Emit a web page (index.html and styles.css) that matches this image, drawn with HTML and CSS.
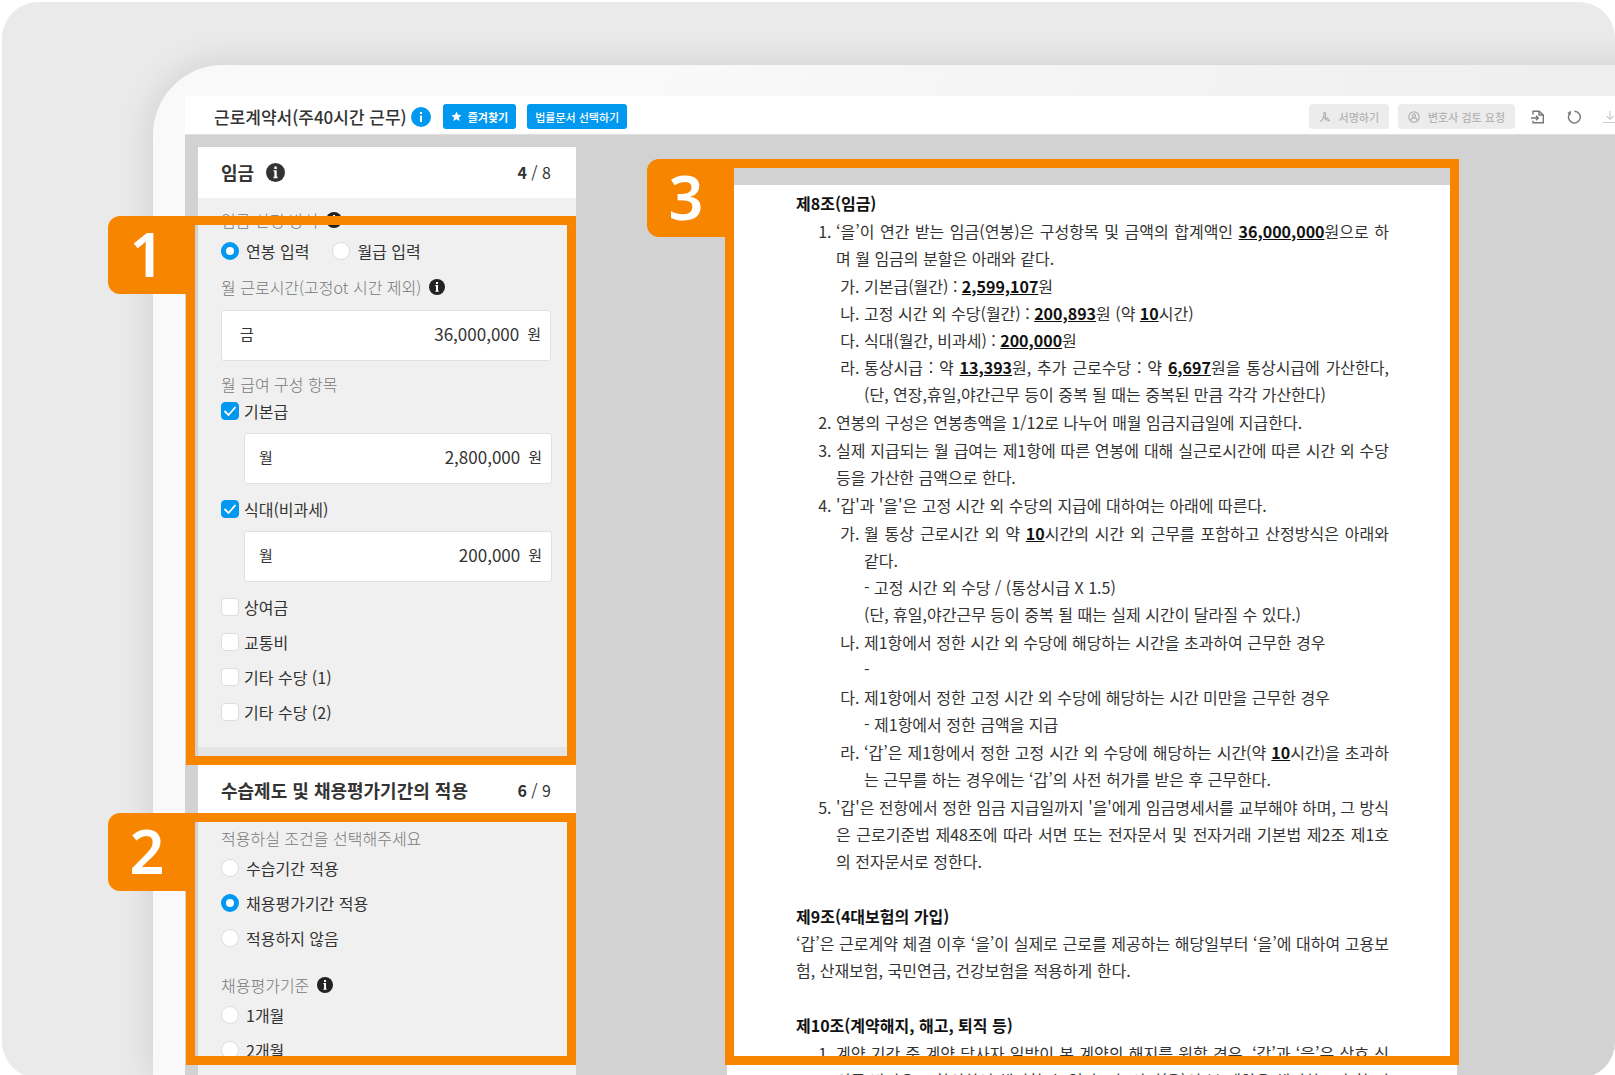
FILE: index.html
```html
<!DOCTYPE html>
<html lang="ko">
<head>
<meta charset="utf-8">
<meta name="viewport" content="width=device-width, initial-scale=1">
<title>근로계약서(주40시간 근무)</title>
<link rel="stylesheet" href="styles.css">
</head>
<body>
<svg class="sprite" aria-hidden="true">
  <symbol id="info" viewBox="0 0 20 20">
    <circle cx="10" cy="10" r="10" fill="currentColor"/>
    <path d="M8.800 3.800h2.500v2.500H8.800zM7.900 7.600h3.400v7h.9V16H7.900v-1.400h.9V9h-.9z" fill="#fff"/>
  </symbol>
  <symbol id="info-round" viewBox="0 0 20 20">
    <circle cx="10" cy="10" r="10" fill="currentColor"/>
    <path d="M9 5h2v2H9zM9 8.5h2V15H9z" fill="#fff"/>
  </symbol>
</svg>

<div class="stage">
  <div class="device">
    <main class="screen">
      <header class="topbar">
        <h1 class="topbar-title">근로계약서(주40시간 근무)</h1>
        <svg class="icon-title"><use href="#info-round"/></svg>
        <button class="btn btn-favorite" type="button">
          <svg class="icon-star" viewBox="0 0 12 12"><path d="M6 .5l1.6 3.6 3.9.4-2.9 2.6.8 3.9L6 9l-3.400 2 .8-3.900L.5 4.500l3.900-.4z" fill="currentColor"/></svg>
          즐겨찾기
        </button>
        <button class="btn" type="button">법률문서 선택하기</button>
        <div class="tools">
          <button class="btn btn-muted" type="button" disabled>
            <svg class="icon-small" viewBox="0 0 12 12" fill="none" stroke="currentColor" stroke-width="1.300"><path d="M1 10.500c3-1 4-5 4-8.500 0-1 1.500-1 1.500.5v7M3.500 6.500h3M6.500 9.500c1-3 2.500-3 2.500-1.500v1.500h2"/></svg>
            서명하기
          </button>
          <button class="btn btn-muted btn-review" type="button" disabled>
            <svg class="icon-small" viewBox="0 0 12 12" fill="none" stroke="currentColor" stroke-width="1.300"><circle cx="6" cy="6" r="5.200"/><circle cx="6" cy="4.800" r="1.600"/><path d="M2.500 9.500c.8-2 2-2.600 3.500-2.600s2.700.6 3.500 2.600"/></svg>
            변호사 검토 요청
          </button>
          <button class="tool" type="button" aria-label="불러오기">
            <svg viewBox="0 0 14 14" fill="none" stroke="currentColor" stroke-width="1.400"><path d="M2 4.500V1.200h6.200L12.300 5v7.800H2v-2"/><path d="M8 1.200V5h4.300M0 8h7M5 5.800L7.300 8 5 10.200"/></svg>
          </button>
          <button class="tool" type="button" aria-label="되돌리기">
            <svg viewBox="0 0 14 14" fill="none" stroke="currentColor" stroke-width="1.400"><path d="M2.700 3.500A5.900 5.900 0 1 0 7.500 1.200M1 2.500l2 1.400.3-2.700"/></svg>
          </button>
          <button class="tool tool-faint" type="button" aria-label="다운로드">
            <svg viewBox="0 0 14 14" fill="none" stroke="currentColor" stroke-width="1.200"><path d="M7 1v8M3.500 6L7 9.300 10.500 6M0 12.500h14"/></svg>
          </button>
        </div>
      </header>

      <div class="workspace">
        <aside class="panel">
          <section class="group">
            <div class="group-head">
              <h2 class="group-title">임금</h2>
              <svg class="icon-head"><use href="#info"/></svg>
              <span class="step"><b>4</b> / 8</span>
            </div>
            <div class="group-body">
              <p class="caption caption-first">임금 산정 방식 <svg class="icon-info"><use href="#info"/></svg></p>
              <div class="radio-row">
                <label class="option"><input class="radio" type="radio" name="pay" checked>연봉 입력</label>
                <label class="option"><input class="radio" type="radio" name="pay">월급 입력</label>
              </div>
              <p class="caption caption-hours">월 근로시간(고정ot 시간 제외) <svg class="icon-info"><use href="#info"/></svg></p>
              <label class="field"><span>금</span><input class="amount" type="text" value="36,000,000"><span>원</span></label>
              <p class="caption caption-items">월 급여 구성 항목</p>
              <label class="option option-check"><input class="check" type="checkbox" checked>기본급</label>
              <label class="field field-nested"><span>월</span><input class="amount" type="text" value="2,800,000"><span>원</span></label>
              <label class="option option-check"><input class="check" type="checkbox" checked>식대(비과세)</label>
              <label class="field field-nested"><span>월</span><input class="amount" type="text" value="200,000"><span>원</span></label>
              <div class="option-list">
                <label class="option option-check"><input class="check" type="checkbox">상여금</label>
                <label class="option option-check"><input class="check" type="checkbox">교통비</label>
                <label class="option option-check"><input class="check" type="checkbox">기타 수당 (1)</label>
                <label class="option option-check"><input class="check" type="checkbox">기타 수당 (2)</label>
              </div>
            </div>
            <div class="callout callout-side"><span class="tag">1</span></div>
          </section>

          <section class="group">
            <div class="group-head">
              <h2 class="group-title">수습제도 및 채용평가기간의 적용</h2>
              <span class="step"><b>6</b> / 9</span>
            </div>
            <div class="group-body group-body-trial">
              <p class="caption">적용하실 조건을 선택해주세요</p>
              <div class="option-list">
                <label class="option"><input class="radio" type="radio" name="trial">수습기간 적용</label>
                <label class="option"><input class="radio" type="radio" name="trial" checked>채용평가기간 적용</label>
                <label class="option"><input class="radio" type="radio" name="trial">적용하지 않음</label>
              </div>
              <p class="caption caption-period">채용평가기준 <svg class="icon-info"><use href="#info"/></svg></p>
              <div class="option-list">
                <label class="option"><input class="radio" type="radio" name="period">1개월</label>
                <label class="option"><input class="radio" type="radio" name="period">2개월</label>
              </div>
            </div>
            <div class="callout callout-trial"><span class="tag">2</span></div>
          </section>
        </aside>

        <div class="viewer">
          <article class="paper">
            <h3 class="article-title">제8조(임금)</h3>
            <ol class="clauses">
              <li>‘을’이 연간 받는 임금(연봉)은 구성항목 및 금액의 합계액인 <b class="value">36,000,000</b>원으로 하며 월 임금의 분할은 아래와 같다.
                <ol class="items items-tight">
                  <li>기본급(월간) : <b class="value">2,599,107</b>원</li>
                  <li>고정 시간 외 수당(월간) : <b class="value">200,893</b>원 (약 <b class="value">10</b>시간)</li>
                  <li>식대(월간, 비과세) : <b class="value">200,000</b>원</li>
                  <li>통상시급 : 약 <b class="value">13,393</b>원, 추가 근로수당 : 약 <b class="value">6,697</b>원을 통상시급에 가산한다, (단, 연장,휴일,야간근무 등이 중복 될 때는 중복된 만큼 각각 가산한다)</li>
                </ol>
              </li>
              <li>연봉의 구성은 연봉총액을 1/12로 나누어 매월 임금지급일에 지급한다.</li>
              <li>실제 지급되는 월 급여는 제1항에 따른 연봉에 대해 실근로시간에 따른 시간 외 수당 등을 가산한 금액으로 한다.</li>
              <li>'갑'과 '을'은 고정 시간 외 수당의 지급에 대하여는 아래에 따른다.
                <ol class="items">
                  <li>월 통상 근로시간 외 약 <b class="value">10</b>시간의 시간 외 근무를 포함하고 산정방식은 아래와 같다.<p>- 고정 시간 외 수당 / (통상시급 X 1.5)</p><p>(단, 휴일,야간근무 등이 중복 될 때는 실제 시간이 달라질 수 있다.)</p></li>
                  <li>제1항에서 정한 시간 외 수당에 해당하는 시간을 초과하여 근무한 경우<p>-</p></li>
                  <li>제1항에서 정한 고정 시간 외 수당에 해당하는 시간 미만을 근무한 경우<p>- 제1항에서 정한 금액을 지급</p></li>
                  <li>‘갑’은 제1항에서 정한 고정 시간 외 수당에 해당하는 시간(약 <b class="value">10</b>시간)을 초과하는 근무를 하는 경우에는 ‘갑’의 사전 허가를 받은 후 근무한다.</li>
                </ol>
              </li>
              <li>'갑'은 전항에서 정한 임금 지급일까지 '을'에게 임금명세서를 교부해야 하며, 그 방식은 근로기준법 제48조에 따라 서면 또는 전자문서 및 전자거래 기본법 제2조 제1호의 전자문서로 정한다.</li>
            </ol>
            <h3 class="article-title">제9조(4대보험의 가입)</h3>
            <p>‘갑’은 근로계약 체결 이후 ‘을’이 실제로 근로를 제공하는 해당일부터 ‘을’에 대하여 고용보험, 산재보험, 국민연금, 건강보험을 적용하게 한다.</p>
            <h3 class="article-title">제10조(계약해지, 해고, 퇴직 등)</h3>
            <ol class="clauses">
              <li>계약 기간 중 계약 당사자 일방이 본 계약의 해지를 원할 경우, ‘갑’과 ‘을’은 상호 신의를 바탕으로 합의하여 해지할 수 있다. 단, 사전(을)이 본 계약을 해지하고자 할 경우</li>
            </ol>
          </article>
          <div class="callout callout-paper"><span class="tag">3</span></div>
        </div>
      </div>
    </main>
  </div>
</div>
</body>
</html>
```
FILE: styles.css
```css
* { box-sizing: border-box; }

@counter-style hangul {
  system: cyclic;
  symbols: "가" "나" "다" "라";
  suffix: ". ";
}

body {
  margin: 0;
  height: 100vh;
  overflow: hidden;
  background: #fff;
  color: #333;
  font: 16px/24px "Noto Sans CJK KR", "Noto Sans", sans-serif;
}

h1, h2, h3, p, ol { margin: 0; padding: 0; }
button, input { font-family: inherit; color: inherit; }

.sprite { position: absolute; width: 0; height: 0; }

.stage {
  display: flex;
  height: calc(100vh + 1px);
  margin: 2px 0 0 2px;
  padding: 63px 0 0 151px;
  overflow: hidden;
  border-radius: 36px;
  background: #eaeaea;
}

.device {
  display: flex;
  flex: 1;
  min-width: 0;
  margin-right: -40px;
  padding: 31px 0 0 32px;
  border-radius: 70px 0 0 0;
  background: linear-gradient(100deg, #f9f9f9 30%, #ececec);
  box-shadow: 0 0 36px rgba(0, 0, 0, 0.13);
}

.screen {
  display: flex;
  flex: 1;
  flex-direction: column;
  min-width: 0;
  background: #d2d2d2;
}

/* Top bar */
.topbar {
  display: flex;
  align-items: center;
  height: 39px;
  flex: none;
  padding: 3px 35px 0 29px;
  border-bottom: 1px solid #e0e0e0;
  background: #fff;
}

.topbar-title { font-size: 17px; font-weight: 500; line-height: 24px; }
.icon-title { width: 20px; height: 20px; margin: 0 12px 0 4px; color: #0199f0; }

.btn {
  display: flex;
  align-items: center;
  justify-content: center;
  height: 25px;
  padding: 0 8px;
  border: 0;
  border-radius: 3px;
  background: #0199f0;
  color: #fff;
  font-size: 11px;
  font-weight: 500;
  line-height: 16px;
}

.btn-favorite { gap: 6px; margin-right: 11px; font-weight: 700; }
.icon-star { width: 11px; height: 11px; }

.tools { display: flex; align-items: center; margin-left: auto; color: #777; }
.btn-muted { gap: 8px; padding: 0 10px; border-radius: 4px; background: #ececec; color: #b4b4b4; }
.btn-review { margin: 0 13px 0 9px; }
.icon-small { width: 12px; height: 12px; }

.tool {
  display: flex;
  align-items: center;
  justify-content: center;
  width: 20px;
  height: 24px;
  margin-right: 16px;
  padding: 0;
  border: 0;
  background: none;
}
.tool svg { width: 14px; height: 14px; }
.tool-faint { margin-right: 0; color: #ccc; }

/* Workspace */
.workspace { display: flex; flex: 1; min-height: 0; padding: 12px 0 0 13px; }
.panel { width: 378px; flex: none; background: #f0f0f0; }

.group { position: relative; }

.group-head {
  display: flex;
  align-items: center;
  height: 51px;
  padding: 0 25px 1px 23px;
  background: #fff;
}
.group-title { font-size: 18px; font-weight: 700; line-height: 26px; }
.icon-head { width: 19px; height: 19px; margin-left: 12px; }
.step { margin-left: auto; font-size: 16px; }
.step b { font-weight: 700; }

.group-body {
  display: flow-root;
  height: 567px;
  padding: 10px 25px 0 23px;
  border-bottom: 18px solid #e4e4e4;
  background: #f0f0f0;
}
.group-body-trial { height: auto; border-bottom: 0; }

.caption { display: flex; align-items: center; height: 24px; color: #777; font-weight: 300; }
.icon-info { width: 16px; height: 16px; margin-left: 8px; color: #222; }
.caption-hours { margin-top: 12px; }
.caption-items { margin-top: 11px; }
.caption-period { margin-top: 23px; }

.option { display: flex; align-items: center; gap: 7px; height: 24px; }
.option-check { gap: 5px; margin-top: 3px; }
.radio-row { display: flex; gap: 23px; margin-top: 7px; }
.option-list { display: grid; gap: 11px; margin-top: 6px; }
.option-list .option-check { margin-top: 0; }

.radio, .check {
  width: 18px;
  height: 18px;
  margin: 0;
  flex: none;
  appearance: none;
  border: 1px solid #ddd;
  background: #fff;
}
.radio { border-radius: 50%; }
.radio:checked { border: 5px solid #0199f0; }
.check { border-radius: 4px; }
.check:checked {
  border-color: #0199f0;
  background: #0199f0 url("data:image/svg+xml,%3Csvg xmlns='http://www.w3.org/2000/svg' viewBox='0 0 16 16' fill='none' stroke='white' stroke-width='1.8'%3E%3Cpath d='M2.500 8l4 4 7-8'/%3E%3C/svg%3E") center / 16px no-repeat;
}

.field {
  display: flex;
  align-items: center;
  height: 51px;
  margin-top: 11px;
  padding: 0 9px 4px 18px;
  border: 1px solid #e0e0e0;
  border-radius: 3px;
  background: #fff;
  font-size: 15px;
}
.field-nested { margin: 10px -1px 13px 23px; padding-left: 14px; }

.amount {
  flex: 1;
  min-width: 0;
  padding: 0;
  margin-right: 8px;
  border: 0;
  outline: 0;
  background: none;
  font-size: 17px;
  text-align: right;
}

/* Document */
.viewer { position: relative; flex: 1; padding: 38px 0 0 151px; overflow: visible; }

.paper {
  width: 730px;
  height: 100%;
  padding: 5px 68px 0 69px;
  overflow: hidden;
  background: #fff;
  line-height: 27px;
  text-align: justify;
}

.article-title { margin-top: 28px; color: #111; font-size: 16px; font-weight: 700; }
.article-title:first-child { margin-top: 0; }

.clauses { padding-left: 40px; }
.clauses > li, .items > li { margin-top: 1px; }
.items { margin-top: 1px; padding-left: 28px; list-style: hangul; }
.items-tight > li { margin-top: 0; }
.value { color: #111; font-weight: 700; text-decoration: underline; }

/* Numbered highlight frames */
.callout { position: absolute; border: 9px solid #f78500; pointer-events: none; }
.callout-side { inset: 69px 0 0 -12px; }
.callout-trial { top: 48px; right: 0; left: -12px; height: 252px; }
.callout-paper { top: 12px; left: 149px; width: 734px; height: 906px; }

.tag {
  position: absolute;
  top: -9px;
  right: 100%;
  width: 87px;
  height: 78px;
  padding-right: 9px;
  border-radius: 12px 0 0 12px;
  background: #f78500;
  color: #fff;
  font-family: "Noto Sans", "Open Sans", sans-serif;
  font-size: 61px;
  font-weight: 600;
  line-height: 75px;
  text-align: center;
}
```
